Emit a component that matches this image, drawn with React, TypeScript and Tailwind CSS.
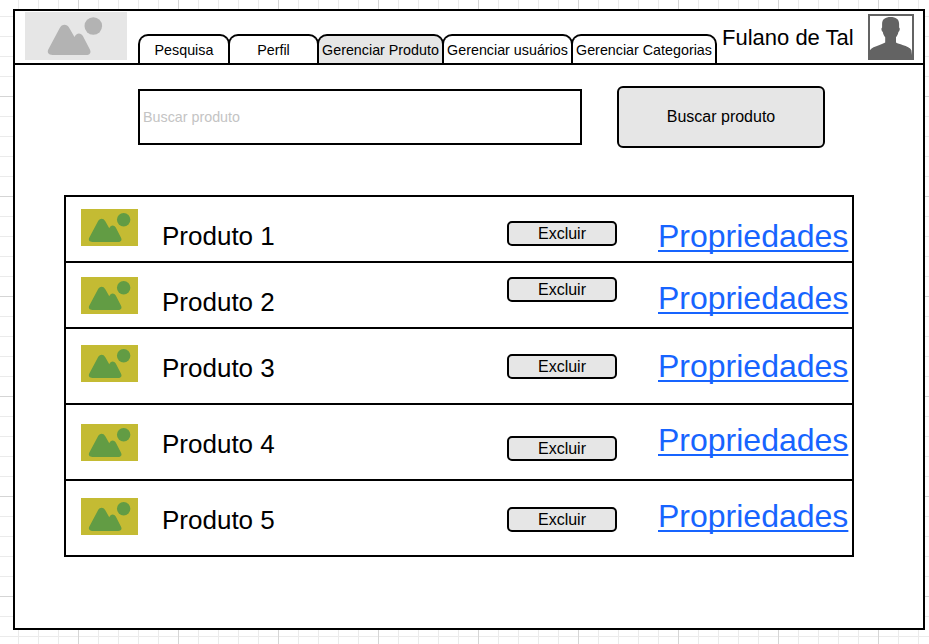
type PictureProps = {
  className: string;
  shape: string;
  width: number;
  height: number;
  transform: string;
};

function Picture({ className, shape, width, height, transform }: PictureProps) {
  return (
    <svg className={className} width={width} height={height} viewBox={`0 0 ${width} ${height}`}>
      <g transform={transform} className={shape}>
        <path d="M0.3 24.6 L11.6 3.2 C14 -1.3 18.8 -1.3 21.3 3 L26.5 12 C28.3 7.5 32.8 7.3 35 11.2 L41.9 24.4 C43.5 27.6 41.8 30 38 30 L4.6 30 C0.4 30 -1.1 27.5 0.3 24.6 Z" />
        <circle cx="45.3" cy="1" r="8.8" />
      </g>
    </svg>
  );
}

function Avatar() {
  return (
    <svg className="mt-[3px] ml-auto mr-[9px] shrink-0" width="46" height="46" viewBox="0 0 46 46">
      <rect x="1" y="1" width="44" height="44" fill="#fff" stroke="#636363" strokeWidth="2" />
      <path
        fill="#636363"
        d="M14.1 10 C14.1 5 17.4 3 22.6 3 C27.8 3 31.1 5 31.1 10 L31.1 13.4 C32.3 14 31.9 16.8 30.4 18 C30 20.3 29 22.2 28 23.3 L28 28.6 C29.5 29.5 32 30.2 34.5 31.1 C39 32.6 42.2 34 43.4 36.2 L44 41 L44 45 L1.5 45 L1.5 36.8 C3.5 34 7 32.6 11.5 31.1 C13.6 30.3 15.6 29.6 17.2 28.6 L17.2 23.3 C16.2 22.2 15.2 20.3 14.8 18 C13.3 16.8 12.9 14 14.1 13.4 Z"
      />
    </svg>
  );
}

const tabs = [
  { label: "Pesquisa", size: "w-[92px] bg-white" },
  { label: "Perfil", size: "w-[91px] -ml-[2px] bg-white" },
  { label: "Gerenciar Produto", size: "w-[127px] -ml-[2px] bg-[#e6e6e6]" },
  { label: "Gerenciar usuários", size: "w-[131px] -ml-[2px] bg-white" },
  { label: "Gerenciar Categorias", size: "w-[146px] -ml-[2px] bg-white" },
];

const products = [
  { name: "Produto 1", row: "h-[66px]", thumb: "mt-[12px]", button: "mt-[24px]", link: "mt-[21px]" },
  { name: "Produto 2", row: "h-[66px]", thumb: "mt-[14px]", button: "mt-[14px]", link: "mt-[17px]" },
  { name: "Produto 3", row: "h-[76px]", thumb: "mt-[16px]", button: "mt-[25px]", link: "mt-[19px]" },
  { name: "Produto 4", row: "h-[76px]", thumb: "mt-[19px]", button: "mt-[31px]", link: "mt-[17px]" },
  { name: "Produto 5", row: "h-[76px]", thumb: "mt-[17px]", button: "mt-[26px]", link: "mt-[17px]" },
];

const gridLines =
  "bg-[linear-gradient(to_right,#d5d5d5_1px,transparent_1px),linear-gradient(to_bottom,#d5d5d5_1px,transparent_1px),linear-gradient(to_right,#ebebeb_1px,transparent_1px),linear-gradient(to_bottom,#ebebeb_1px,transparent_1px)] bg-[size:100px_100px,100px_100px,20px_20px,20px_20px] bg-[position:78px_0px,0px_96px,18px_0px,0px_16px]";

export default function App() {
  return (
    <div
      className={`h-[644px] w-[929px] overflow-hidden bg-white pt-[9px] pl-[13px] font-['Liberation_Sans',Arial,sans-serif] text-black ${gridLines}`}
    >
      <div className="h-[621px] w-[912px] border-2 border-black bg-white">
        <header className="flex h-[54px] items-start border-b-2 border-black">
          <Picture
            className="mt-px ml-[10px] shrink-0 bg-[#e6e6e6]"
            shape="fill-[#b3b3b3]"
            width={102}
            height={48}
            transform="translate(23 13)"
          />
          <nav className="mt-[23px] ml-[11px] flex shrink-0">
            {tabs.map((tab) => (
              <div
                key={tab.label}
                className={`flex h-[29px] shrink-0 justify-center rounded-t-[10px] border-2 border-b-0 border-black pt-[5px] text-[14.3px] leading-[18px] whitespace-nowrap ${tab.size}`}
              >
                {tab.label}
              </div>
            ))}
          </nav>
          <span className="mt-[14px] ml-[5px] text-[22px] leading-[26px] whitespace-nowrap">Fulano de Tal</span>
          <Avatar />
        </header>

        <section className="flex items-start pt-[21px] pl-[123px]">
          <div className="mt-[3px] flex h-[56px] w-[444px] items-center border-2 border-black pt-[2px] pl-[3px] text-[14.3px] text-[#c4c4c4]">
            Buscar produto
          </div>
          <button className="ml-[35px] h-[62px] w-[208px] rounded-[6px] border-2 border-black bg-[#e6e6e6] text-base">
            Buscar produto
          </button>
        </section>

        <ul className="mt-[47px] ml-[49px] w-[790px] border-2 border-b-0 border-black">
          {products.map((p) => (
            <li key={p.name} className={`flex items-start border-b-2 border-black ${p.row}`}>
              <Picture
                className={`ml-[15px] shrink-0 bg-[#c4bb33] ${p.thumb}`}
                shape="fill-[#629c44]"
                width={57}
                height={37}
                transform="translate(8 10) scale(0.765)"
              />
              <span className="mt-[24px] ml-[24px] w-[345px] text-[26px] leading-[30px]">{p.name}</span>
              <button
                className={`h-[25px] w-[110px] shrink-0 rounded-[5px] border-2 border-black bg-[#e6e6e6] text-base leading-[21px] ${p.button}`}
              >
                Excluir
              </button>
              <a
                className={`ml-[41px] text-[32px] leading-[36px] text-[#1764ff] underline decoration-2 underline-offset-[3px] [text-decoration-skip-ink:none] ${p.link}`}
              >
                Propriedades
              </a>
            </li>
          ))}
        </ul>
      </div>
    </div>
  );
}
